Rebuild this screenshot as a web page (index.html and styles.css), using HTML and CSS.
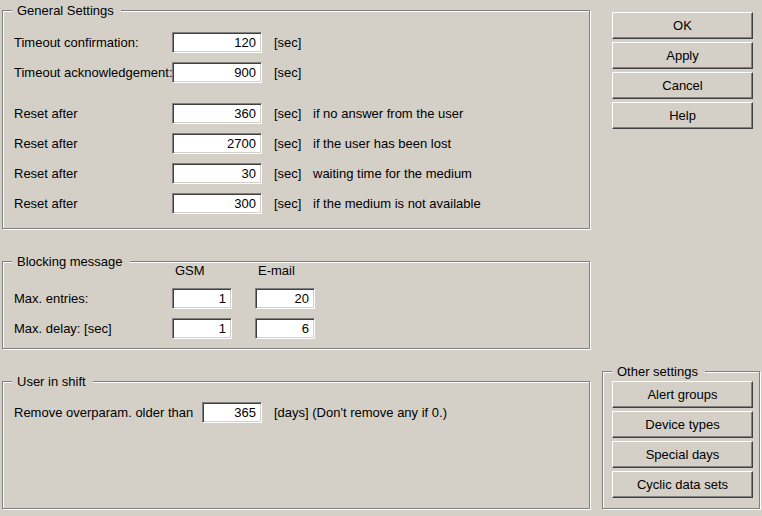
FILE: index.html
```html
<!DOCTYPE html>
<html>
<head>
<meta charset="utf-8">
<link rel="stylesheet" href="styles.css">
</head>
<body>
<div class="page">
  <div class="left">
    <div class="group general">
      <span class="title">General Settings</span>
      <div class="grid gen-grid">
        <span class="label">Timeout confirmation:</span><span class="edit w90">120</span><span class="unit">[sec]</span><span></span>
        <span class="label">Timeout acknowledgement:</span><span class="edit w90">900</span><span class="unit">[sec]</span><span></span>
        <span class="spacer"></span>
        <span class="label">Reset after</span><span class="edit w90">360</span><span class="unit">[sec]</span><span class="desc">if no answer from the user</span>
        <span class="label">Reset after</span><span class="edit w90">2700</span><span class="unit">[sec]</span><span class="desc">if the user has been lost</span>
        <span class="label">Reset after</span><span class="edit w90">30</span><span class="unit">[sec]</span><span class="desc">waiting time for the medium</span>
        <span class="label">Reset after</span><span class="edit w90">300</span><span class="unit">[sec]</span><span class="desc">if the medium is not available</span>
      </div>
    </div>
    <div class="group blocking">
      <span class="title">Blocking message</span>
      <div class="grid block-grid">
        <span></span><span class="colhead">GSM</span><span></span><span class="colhead">E-mail</span>
        <span class="label">Max. entries:</span><span class="edit w60">1</span><span></span><span class="edit w60">20</span>
        <span class="label">Max. delay: [sec]</span><span class="edit w60">1</span><span></span><span class="edit w60">6</span>
      </div>
    </div>
    <div class="group shift">
      <span class="title">User in shift</span>
      <div class="row shift-row">
        <span class="label wide">Remove overparam. older than</span><span class="edit w60">365</span><span class="unit">[days] (Don't remove any if 0.)</span>
      </div>
    </div>
  </div>
  <div class="right">
    <div class="btn-stack">
      <div class="btn">OK</div>
      <div class="btn">Apply</div>
      <div class="btn">Cancel</div>
      <div class="btn">Help</div>
    </div>
    <div class="group other">
      <span class="title">Other settings</span>
      <div class="btn-stack inner">
        <div class="btn">Alert groups</div>
        <div class="btn">Device types</div>
        <div class="btn">Special days</div>
        <div class="btn">Cyclic data sets</div>
      </div>
    </div>
  </div>
</div>
</body>
</html>
```
FILE: styles.css
```css
* { box-sizing: border-box; }
html, body {
  margin: 0;
  padding: 0;
  background: #d4d0c8;
}
body {
  font-family: "Liberation Sans", Arial, sans-serif;
  font-size: 13px;
  line-height: 15px;
  color: #000;
  width: 762px;
  height: 516px;
  overflow: hidden;
}
.page {
  display: flex;
  padding-left: 2px;
}
.left {
  width: 588px;
  padding-top: 10px;
  display: flex;
  flex-direction: column;
  gap: 32px;
}
.right {
  width: 158px;
  margin-left: 12px;
  height: 509px;
  display: flex;
  flex-direction: column;
}
.group {
  position: relative;
  border: 1px solid #808080;
  box-shadow: inset 1px 1px 0 #fff, 1px 1px 0 #fff;
}
.title {
  position: absolute;
  top: -8px;
  left: 9px;
  padding: 0 7px 0 5px;
  background: #d4d0c8;
  white-space: nowrap;
}
.general { height: 219px; padding: 21px 0 0 11px; }
.blocking { height: 88px; padding: 0 0 0 11px; }
.shift { height: 128px; padding: 20px 0 0 11px; }
.other { height: 138px; margin-top: auto; padding: 9px 0 0 9px; }

.grid { display: grid; align-items: center; }
.gen-grid {
  grid-template-columns: 158px 90px 51px auto;
  grid-template-rows: 21px 21px 2px 21px 21px 21px 21px;
  row-gap: 9px;
}
.gen-grid .spacer { grid-column: 1 / -1; height: 2px; }
.block-grid {
  grid-template-columns: 158px 60px 23px 60px;
  grid-template-rows: 17px 21px 21px;
  row-gap: 9px;
}
.colhead { padding-left: 3px; }
.row { display: flex; align-items: center; height: 21px; }
.label { white-space: nowrap; }
.wide { width: 188px; flex: none; }
.unit { padding-left: 12px; white-space: nowrap; }
.desc { white-space: nowrap; }
.edit {
  display: block;
  height: 21px;
  background: #fff;
  border: 1px solid;
  border-color: #808080 #fff #fff #808080;
  box-shadow: inset 1px 1px 0 #404040, inset -1px -1px 0 #d4d0c8;
  text-align: right;
  padding: 2px 5px 0 0;
  position: relative;
}
.w90 { width: 90px; }
.w60 { width: 60px; flex: none; }

.btn-stack {
  display: flex;
  flex-direction: column;
  gap: 3px;
  margin-top: 12px;
  padding-left: 10px;
}
.btn-stack.inner { margin-top: 0; padding-left: 0; }
.btn {
  width: 141px;
  height: 27px;
  border: 1px solid;
  border-color: #fff #404040 #404040 #fff;
  box-shadow: inset -1px -1px 0 #808080;
  display: flex;
  align-items: center;
  justify-content: center;
  padding-bottom: 1px;
}
```
